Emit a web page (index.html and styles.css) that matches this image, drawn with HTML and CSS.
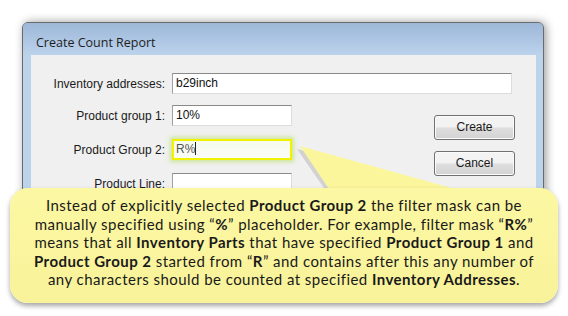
FILE: index.html
```html
<!DOCTYPE html>
<html>
<head>
    <title>Create Count Report</title>
    <link rel="stylesheet" href="styles.css">
</head>
<body>
    <div class="stage">
        <div class="window">
            <div class="titlebar">Create Count Report</div>
            <div class="client">
                <div class="row">
                    <label class="label">Inventory addresses:</label>
                    <div class="field wide">b29inch</div>
                </div>
                <div class="lower">
                    <div class="fields">
                        <div class="row">
                            <label class="label">Product group 1:</label>
                            <div class="field">10%</div>
                        </div>
                        <div class="row">
                            <label class="label">Product Group 2:</label>
                            <div class="field marked">R%<span class="caret"></span></div>
                        </div>
                        <div class="row">
                            <label class="label">Product Line:</label>
                            <div class="field"></div>
                        </div>
                    </div>
                    <div class="buttons">
                        <div class="button">Create</div>
                        <div class="button">Cancel</div>
                    </div>
                </div>
            </div>
        </div>

        <svg class="tail" width="568" height="316" viewBox="0 0 568 316">
            <polygon points="297,149 328,194 468,194" fill="#b9b9b9" opacity="0.55"/>
            <polygon points="300,146 331,192 466,192" fill="#fbf69c"/>
        </svg>

        <div class="callout">
            Instead of explicitly selected <b>Product Group 2</b> the filter mask can be<br>
            manually specified using “<b>%</b>” placeholder. For example, filter mask “<b>R%</b>”<br>
            means that all <b>Inventory Parts</b> that have specified <b>Product Group 1</b> and<br>
            <b>Product Group 2</b> started from “<b>R</b>” and contains after this any number of<br>
            any characters should be counted at specified <b>Inventory Addresses</b>.
        </div>
    </div>
</body>
</html>
```

FILE: styles.css
```css
body {
    margin: 0;
    background: #fff;
    font-family: "Liberation Sans", Arial, sans-serif;
}
.stage {
    position: relative;
    width: 568px;
    height: 316px;
    overflow: hidden;
    padding-top: 22px;
    box-sizing: border-box;
}
.window {
    margin-left: 22px;
    width: 522px;
    height: 268px;
    box-sizing: border-box;
    border: 1px solid #6b6b6b;
    border-radius: 6px 6px 0 0;
    background: #bcd3ec;
    box-shadow: 2px 0 10px rgba(0, 0, 0, 0.4);
    padding: 0 7px 0 8px;
}
.titlebar {
    height: 32px;
    margin: 0 -7px 0 -8px;
    padding: 8px 0 0 13px;
    box-sizing: border-box;
    border-radius: 5px 5px 0 0;
    background: linear-gradient(#9db7d8, #bcd3ec);
    font-family: "Open Sans", "Liberation Sans", sans-serif;
    font-size: 12.5px;
    line-height: 24px;
    color: #1e1e1e;
}
.client {
    background: #f0f0f0;
    height: 240px;
    padding-top: 18px;
    box-sizing: border-box;
}
.row {
    display: flex;
    align-items: center;
    height: 21px;
}
.label {
    width: 134px;
    margin-right: 7px;
    text-align: right;
    font-size: 12px;
    color: #1a1a1a;
}
.field {
    width: 120px;
    height: 21px;
    box-sizing: border-box;
    background: #fff;
    border: 1px solid #dcdcdc;
    border-top-color: #8a8a8a;
    border-left-color: #a0a0a0;
    font-size: 12px;
    line-height: 19px;
    padding-left: 3px;
    color: #111;
}
.field.wide {
    width: 340px;
}
.field.marked {
    border: 2px solid #f2f200;
    line-height: 17px;
    padding-left: 2px;
    color: #555;
    background: linear-gradient(#f4faec, #fafdf6);
    box-shadow: 0 0 4px 2px rgba(180, 225, 90, 0.6);
}
.caret {
    display: inline-block;
    width: 1px;
    height: 13px;
    background: #222;
    vertical-align: -2px;
}
.lower {
    display: flex;
    margin-top: 11px;
}
.fields {
    display: flex;
    flex-direction: column;
    gap: 13px;
}
.buttons {
    margin-left: auto;
    margin-right: 21px;
    margin-top: 10px;
    display: flex;
    flex-direction: column;
    gap: 11px;
}
.button {
    width: 81px;
    height: 25px;
    box-sizing: border-box;
    border: 1px solid #707070;
    border-radius: 3px;
    background: linear-gradient(#f3f3f3 45%, #dddddd 55%, #d3d3d3);
    box-shadow: inset 0 0 0 1px #fbfbfb;
    text-align: center;
    font-size: 12px;
    line-height: 23px;
    color: #1a1a1a;
}
.tail {
    position: absolute;
    left: 0;
    top: 0;
}
.callout {
    position: absolute;
    left: 10px;
    top: 188px;
    width: 548px;
    height: 115px;
    box-sizing: border-box;
    padding-top: 8px;
    border-radius: 18px;
    background: linear-gradient(#fcf7a2, #f8f39a);
    box-shadow: 0 3px 5px rgba(0, 0, 0, 0.35);
    text-align: center;
    font-family: Lato, "Open Sans", sans-serif;
    font-size: 15px;
    letter-spacing: 0.45px;
    line-height: 18.5px;
    color: #1a1a1a;
}
.callout b {
    font-weight: bold;
}
```
